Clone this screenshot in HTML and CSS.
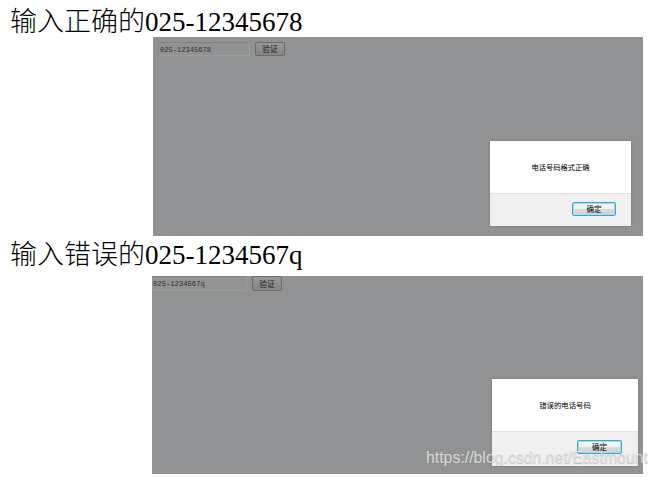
FILE: index.html
```
<!DOCTYPE html>
<html lang="zh-CN">
<head>
<meta charset="utf-8">
<title>电话号码验证</title>
<link rel="stylesheet" href="styles.css">
</head>
<body>
<main class="page">
  <h1 class="heading"><span class="han">输入正确的</span>025-12345678</h1>
  <section class="screen">
    <div class="form"><span class="field">025-12345678</span><span class="verify">验证</span></div>
    <div class="dialog">
      <p class="message">电话号码格式正确</p>
      <div class="actions"><span class="ok">确定</span></div>
    </div>
  </section>
  <h1 class="heading second"><span class="han">输入错误的</span>025-1234567q</h1>
  <section class="screen wrong">
    <div class="form"><span class="field">025-1234567q</span><span class="verify">验证</span></div>
    <div class="dialog">
      <p class="message">错误的电话号码</p>
      <div class="actions"><span class="ok">确定</span></div>
    </div>
  </section>
  <div class="watermark">https://blog.csdn.net/Eastmount</div>
</main>
</body>
</html>
```
FILE: styles.css
```
* { box-sizing: border-box; }
body { margin: 0; background: #fff; }
.page { position: relative; width: 658px; height: 477px; overflow: hidden; }
.heading {
  margin: 0;
  height: 37px;
  padding: 4px 0 0 10px;
  font: 400 27px/31px "Liberation Serif", "Noto Sans CJK SC", serif;
  color: #000;
  white-space: nowrap;
}
.heading.second { height: 40px; padding-top: 1px; }
.han { font-family: "Noto Sans CJK SC", sans-serif; font-weight: 300; }
.screen {
  display: flex;
  flex-direction: column;
  justify-content: space-between;
  width: 490px;
  height: 199px;
  margin-left: 153px;
  padding: 5px 12px 10px 5px;
  background: #919293;
}
.form { display: flex; gap: 5px; height: 14px; }
.field {
  width: 92px;
  padding-left: 1px;
  border: 1px solid #9a9b9b;
  border-top-color: #818282;
  border-left-color: #898a8a;
  font: 7.1px/14px "Liberation Mono", monospace;
  color: #303030;
}
.verify {
  width: 30px;
  border: 1px solid #6b6c6c;
  border-radius: 2px;
  background: linear-gradient(#989898, #858585);
  font: 8px/12px "Noto Sans CJK SC", sans-serif;
  color: #222;
  text-align: center;
}
.dialog {
  display: flex;
  flex-direction: column;
  align-self: flex-end;
  width: 141px;
  height: 85px;
  background: #fff;
  box-shadow: 0 0 2px #6d6e6e;
}
.message {
  flex: 1;
  margin: 0;
  font: 7.25px/52px "Noto Sans CJK SC", sans-serif;
  color: #000;
  text-align: center;
}
.actions {
  display: flex;
  justify-content: flex-end;
  height: 33px;
  padding: 8px 15px 0 0;
  border-top: 1px solid #e0e0e0;
  background: #f0f0f0;
}
.ok {
  width: 44px;
  height: 14px;
  border: 1px solid #35a9d5;
  border-radius: 2px;
  background: linear-gradient(#f2f2f2 45%, #dcdcdc 50%, #cfcfcf);
  box-shadow: inset 0 0 0 1px #a5dcee;
  font: 7.5px/12px "Noto Sans CJK SC", sans-serif;
  color: #000;
  text-align: center;
}
.wrong { width: 491px; height: 198px; margin-left: 152px; padding: 0 5px 8px 0; }
.wrong .field { width: 95px; height: 15px; border-left: 0; font-size: 7.2px; line-height: 15px; }
.wrong .verify { height: 15px; line-height: 13px; }
.wrong .dialog { width: 146px; height: 87px; }
.wrong .message { font-size: 7.4px; line-height: 51px; }
.wrong .actions { height: 35px; padding: 8px 16px 0 0; }
.wrong .ok { width: 45px; }
.watermark {
  position: absolute;
  left: 426px;
  top: 448px;
  font: 15.85px/20px "Liberation Sans", sans-serif;
  color: rgba(225, 225, 225, .9);
  text-shadow: 0 1px 1px rgba(130, 130, 130, .45);
  white-space: nowrap;
}
```
